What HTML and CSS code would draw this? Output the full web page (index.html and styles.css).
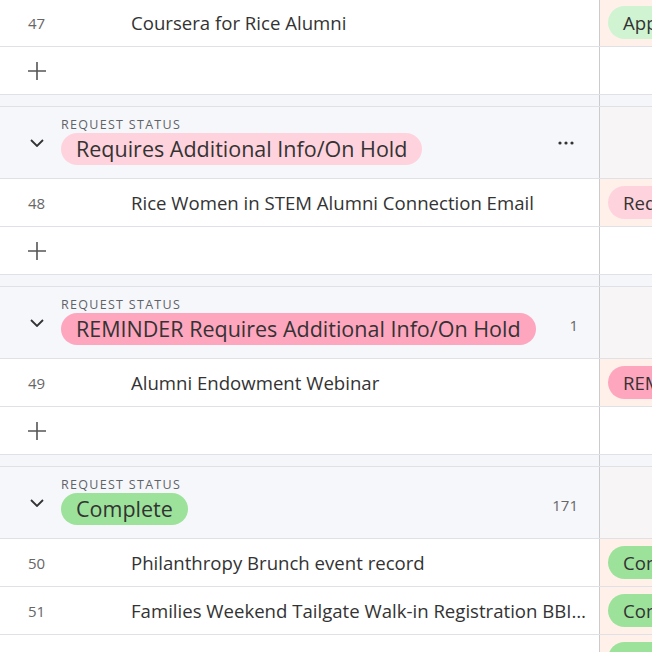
FILE: index.html
```html
<!DOCTYPE html>
<html>
<head>
<meta charset="utf-8">
<link rel="stylesheet" href="styles.css">
</head>
<body>
<div class="table">
  <div class="row data">
    <div class="left"><span class="num">47</span><span class="title">Coursera for Rice Alumni</span></div>
    <div class="right"><span class="pill pill-sm approved">Approved</span></div>
  </div>
  <div class="row add">
    <div class="left"><span class="plus"><svg width="20" height="20" viewBox="0 0 20 20"><path d="M10 1v18M1 10h18" stroke="#555" stroke-width="1.6" fill="none"/></svg></span></div>
    <div class="right"></div>
  </div>
  <div class="row gap"><div class="left"></div><div class="right"></div></div>

  <div class="row header">
    <div class="left">
      <span class="chev"><svg width="14" height="8" viewBox="0 0 14 8"><path d="M1 1l6 6 6-6" stroke="#333" stroke-width="1.8" fill="none"/></svg></span>
      <div class="hcontent"><div class="label">Request Status</div><span class="pill pill-lg pink">Requires Additional Info/On Hold</span></div>
      <span class="more"><svg width="16" height="4" viewBox="0 0 16 4"><circle cx="2" cy="2" r="1.6" fill="#333"/><circle cx="8" cy="2" r="1.6" fill="#333"/><circle cx="14" cy="2" r="1.6" fill="#333"/></svg></span>
    </div>
    <div class="right"></div>
  </div>
  <div class="row data">
    <div class="left"><span class="num">48</span><span class="title">Rice Women in STEM Alumni Connection Email</span></div>
    <div class="right"><span class="pill pill-sm pink">Requires Additional Info/On Hold</span></div>
  </div>
  <div class="row add">
    <div class="left"><span class="plus"><svg width="20" height="20" viewBox="0 0 20 20"><path d="M10 1v18M1 10h18" stroke="#555" stroke-width="1.6" fill="none"/></svg></span></div>
    <div class="right"></div>
  </div>
  <div class="row gap"><div class="left"></div><div class="right"></div></div>

  <div class="row header">
    <div class="left">
      <span class="chev"><svg width="14" height="8" viewBox="0 0 14 8"><path d="M1 1l6 6 6-6" stroke="#333" stroke-width="1.8" fill="none"/></svg></span>
      <div class="hcontent"><div class="label">Request Status</div><span class="pill pill-lg hotpink">REMINDER Requires Additional Info/On Hold</span></div>
      <span class="count">1</span>
    </div>
    <div class="right"></div>
  </div>
  <div class="row data">
    <div class="left"><span class="num">49</span><span class="title">Alumni Endowment Webinar</span></div>
    <div class="right"><span class="pill pill-sm hotpink">REMINDER Requires Additional Info/On Hold</span></div>
  </div>
  <div class="row add">
    <div class="left"><span class="plus"><svg width="20" height="20" viewBox="0 0 20 20"><path d="M10 1v18M1 10h18" stroke="#555" stroke-width="1.6" fill="none"/></svg></span></div>
    <div class="right"></div>
  </div>
  <div class="row gap"><div class="left"></div><div class="right"></div></div>

  <div class="row header">
    <div class="left">
      <span class="chev"><svg width="14" height="8" viewBox="0 0 14 8"><path d="M1 1l6 6 6-6" stroke="#333" stroke-width="1.8" fill="none"/></svg></span>
      <div class="hcontent"><div class="label">Request Status</div><span class="pill pill-lg green">Complete</span></div>
      <span class="count">171</span>
    </div>
    <div class="right"></div>
  </div>
  <div class="row data">
    <div class="left"><span class="num">50</span><span class="title">Philanthropy Brunch event record</span></div>
    <div class="right"><span class="pill pill-sm green">Complete</span></div>
  </div>
  <div class="row data">
    <div class="left"><span class="num">51</span><span class="title">Families Weekend Tailgate Walk-in Registration BBI…</span></div>
    <div class="right"><span class="pill pill-sm green">Complete</span></div>
  </div>
  <div class="row data">
    <div class="left"><span class="num">52</span><span class="title">Homecoming Alumni Reception Registration</span></div>
    <div class="right"><span class="pill pill-sm green">Complete</span></div>
  </div>
</div>
</body>
</html>
```

FILE: styles.css
```css
html, body {
  margin: 0;
  padding: 0;
}
body {
  width: 652px;
  height: 652px;
  overflow: hidden;
  background: #fff;
  font-family: "Open Sans", "Noto Sans", sans-serif;
  color: #333;
}
.table {
  width: 652px;
  margin-top: -1px;
}
.row {
  display: grid;
  grid-template-columns: 600px 52px;
  box-sizing: border-box;
  border-bottom: 1px solid #dfe1e6;
}
.row > .left {
  display: flex;
  align-items: center;
  border-right: 1px solid #cacbce;
  min-width: 0;
}
.row > .right {
  display: flex;
  align-items: center;
  padding-left: 8px;
  overflow: hidden;
  min-width: 0;
}
.data {
  height: 48px;
}
.data > .right {
  background: #fff1ea;
}
.add {
  height: 48px;
}
.gap {
  height: 11px;
  border-bottom: none;
  background: #f5f6fa;
}
.header {
  height: 73px;
  border-top: 1px solid #dfe1e6;
}
.header > .left {
  background: #f6f7fb;
}
.header > .right {
  background: #f8f5f6;
}
.num {
  box-sizing: border-box;
  width: 131px;
  flex: none;
  padding-left: 28px;
  font-size: 15px;
  color: #666;
}
.title {
  flex: 1;
  min-width: 0;
  font-size: 18.6px;
  white-space: nowrap;
  overflow: hidden;
  padding-right: 10px;
}
.plus {
  display: flex;
  padding-left: 27px;
}
.chev {
  display: flex;
  box-sizing: border-box;
  width: 61px;
  flex: none;
  padding-left: 30px;
}
.hcontent {
  flex: 1;
  align-self: flex-start;
  padding-top: 10px;
}
.label {
  font-size: 12.5px;
  line-height: 15px;
  letter-spacing: 1.3px;
  text-transform: uppercase;
  color: #5f6368;
  margin-bottom: 1px;
}
.pill {
  display: inline-block;
  white-space: nowrap;
  color: #333;
}
.pill-lg {
  height: 32px;
  line-height: 32px;
  border-radius: 16px;
  padding: 0 15px;
  font-size: 21.5px;
}
.pill-sm {
  height: 33px;
  line-height: 33px;
  border-radius: 17px;
  padding: 0 15px;
  font-size: 18.6px;
}
.more {
  display: flex;
  padding-right: 25px;
}
.count {
  padding-right: 21px;
  padding-top: 4px;
  font-size: 15px;
  color: #666;
}
.approved { background: #d0f4d2; }
.pink { background: #ffd3dd; }
.hotpink { background: #ffa6bf; }
.green { background: #9de29b; }
```
